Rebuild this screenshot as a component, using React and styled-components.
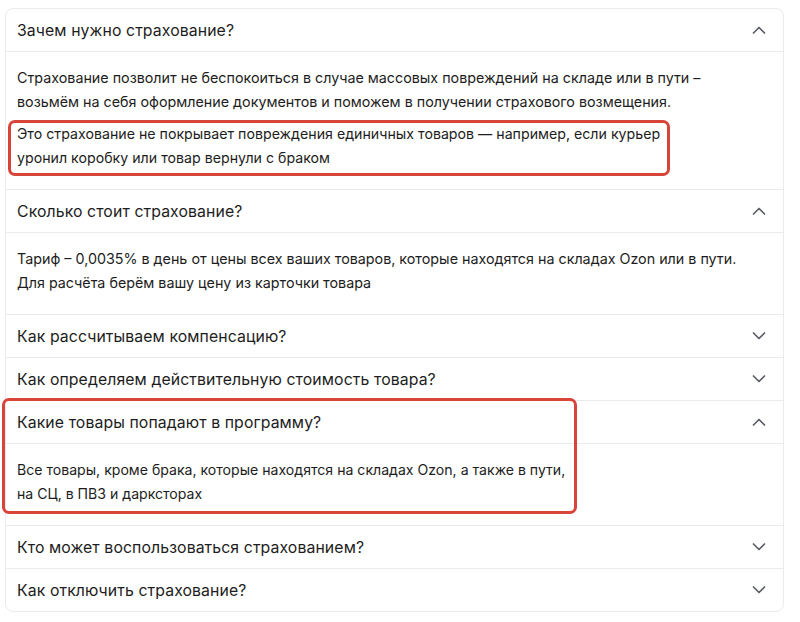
import React from "react";
import styled, { createGlobalStyle } from "styled-components";

const GlobalStyle = createGlobalStyle`
  html, body {
    margin: 0;
    padding: 0;
    background: #ffffff;
  }
  body {
    font-family: Inter, "Noto Sans", "Liberation Sans", sans-serif;
    color: #1d1d21;
    -webkit-font-smoothing: antialiased;
  }
`;

const Page = styled.div`
  padding: 8px 0 0 5px;
`;

const Card = styled.div`
  width: 779px;
  box-sizing: border-box;
  border: 1px solid #ebebeb;
  border-radius: 8px;
  background: #fff;
`;

const Item = styled.section`
  position: relative;
  & + & {
    border-top: 1px solid #ebebeb;
  }
`;

const Header = styled.div`
  display: flex;
  align-items: center;
  justify-content: space-between;
  height: 42px;
  padding: 0 17px 0 11px;
  border-bottom: ${(p) => (p.$open ? "1px solid #ebebeb" : "none")};
`;

const Title = styled.h3`
  margin: 0;
  font-size: 15.8px;
  font-weight: 400;
  letter-spacing: 0.1px;
  color: #1d1d21;
`;

const Body = styled.div`
  padding: 14px 16px 19px 11px;
  display: flex;
  flex-direction: column;
  gap: 8px;
`;

const Text = styled.p`
  position: relative;
  align-self: flex-start;
  margin: 0;
  font-size: ${(p) => p.$size || 14.3}px;
  line-height: 24px;
  color: #1d1d21;
  white-space: nowrap;
`;

const Line = styled.span`
  display: block;
`;

/* red outline drawn over a piece of content */
const Marker = styled.span`
  position: absolute;
  pointer-events: none;
  border: 3px solid #d8433a;
  border-radius: 7px;
  top: ${(p) => p.$top}px;
  left: ${(p) => p.$left}px;
  right: ${(p) => p.$right}px;
  bottom: ${(p) => p.$bottom}px;
`;

const Chevron = ({ up }) => (
  <svg width="14" height="8" viewBox="0 0 14 8" fill="none">
    <path
      d={up ? "M1.5 7L7 1.5L12.5 7" : "M1.5 1L7 6.5L12.5 1"}
      stroke="#5c5f66"
      strokeWidth="1.7"
      strokeLinecap="round"
      strokeLinejoin="round"
    />
  </svg>
);

const faq = [
  {
    q: "Зачем нужно страхование?",
    open: true,
    body: [
      {
        lines: [
          "Страхование позволит не беспокоиться в случае массовых повреждений на складе или в пути –",
          "возьмём на себя оформление документов и поможем в получении страхового возмещения.",
        ],
      },
      {
        lines: [
          "Это страхование не покрывает повреждения единичных товаров — например, если курьер",
          "уронил коробку или товар вернули с браком",
        ],
        size: 14.2,
        mark: true,
      },
    ],
  },
  {
    q: "Сколько стоит страхование?",
    open: true,
    body: [
      {
        lines: [
          "Тариф – 0,0035% в день от цены всех ваших товаров, которые находятся на складах Ozon или в пути.",
          "Для расчёта берём вашу цену из карточки товара",
        ],
      },
    ],
  },
  { q: "Как рассчитываем компенсацию?" },
  { q: "Как определяем действительную стоимость товара?" },
  {
    q: "Какие товары попадают в программу?",
    open: true,
    mark: true,
    body: [
      {
        lines: [
          "Все товары, кроме брака, которые находятся на складах Ozon, а также в пути,",
          "на СЦ, в ПВЗ и \u0434\u0430\u0440\u043a\u0441\u0442\u043e\u0440\u0430\u0445",
        ],
        size: 14.1,
      },
    ],
  },
  { q: "Кто может воспользоваться страхованием?" },
  { q: "Как отключить страхование?" },
];

export default function App() {
  return (
    <>
      <GlobalStyle />
      <Page>
        <Card>
          {faq.map((item) => (
            <Item key={item.q}>
              <Header $open={item.open}>
                <Title>{item.q}</Title>
                <Chevron up={item.open} />
              </Header>
              {item.open && (
                <Body>
                  {item.body.map((b) => (
                    <Text key={b.lines[0]} $size={b.size}>
                      {b.lines.map((l) => (
                        <Line key={l}>{l}</Line>
                      ))}
                      {b.mark && (
                        <Marker $top={-2} $left={-9} $right={-10} $bottom={-6} />
                      )}
                    </Text>
                  ))}
                </Body>
              )}
              {item.mark && (
                <Marker $top={-3} $left={-4} $right={206} $bottom={11} />
              )}
            </Item>
          ))}
        </Card>
      </Page>
    </>
  );
}
